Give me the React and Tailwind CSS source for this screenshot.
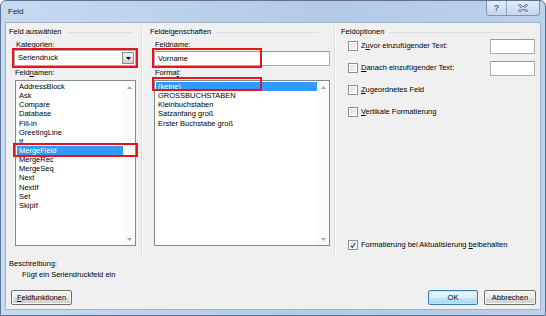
import React from 'react';

const FIELD_NAMES = ['AddressBlock', 'Ask', 'Compare', 'Database', 'Fill-in', 'GreetingLine', 'If', 'MergeField', 'MergeRec', 'MergeSeq', 'Next', 'NextIf', 'Set', 'SkipIf'];
const FORMATS = ['(keine)', 'GROSSBUCHSTABEN', 'Kleinbuchstaben', 'Satzanfang groß', 'Erster Buchstabe groß'];

const GroupHeader = ({ title, className }) => (
  <div className={`flex items-center h-[10px] ${className}`}>
    <span className="whitespace-nowrap">{title}</span>
    <div className="flex-1 h-px bg-[#d5dfe5] ml-[5px]"></div>
  </div>
);

const Arrow = ({ up }) => (
  <div className="w-[12px] h-[12px] flex items-center justify-center">
    <svg width="5" height="3" viewBox="0 0 5 3">
      {up ? <path d="M0 3 L2.5 0 L5 3 Z" fill="#a7a7a7" /> : <path d="M0 0 L2.5 3 L5 0 Z" fill="#a7a7a7" />}
    </svg>
  </div>
);

const ListBox = ({ items, selected, className }) => (
  <div className={`flex border border-[#828790] bg-white ${className}`}>
    <div className="flex-1 pt-px pl-px">
      {items.map((it, i) => (
        <div
          key={i}
          className={`h-[9.15px] leading-[9.15px] pl-[2px] whitespace-nowrap ${i === selected ? 'bg-[#3399ff] text-white' : ''}`}
        >
          {it}
        </div>
      ))}
    </div>
    <div className="w-[12px] flex flex-col justify-between bg-[#fbfbfb]">
      <Arrow up />
      <Arrow />
    </div>
  </div>
);

const Checkbox = ({ checked }) => (
  <div className="w-[10px] h-[10px] border border-[#8e8f8f] bg-white p-px shrink-0">
    <div className="w-full h-full bg-[linear-gradient(135deg,#dcdee0,#f8f8f8)] flex items-center justify-center">
      {checked && (
        <svg width="7" height="7" viewBox="0 0 7 7">
          <path d="M1 3.8 L2.8 5.8 L6 0.8" stroke="#3a51a6" strokeWidth="1.4" fill="none" />
        </svg>
      )}
    </div>
  </div>
);

const TextBox = ({ className, children }) => (
  <div className={`border border-[#abadb3] border-t-[#8e9aa8] bg-white ${className}`}>{children}</div>
);

const Btn = ({ children, isDefault, className }) => (
  <div
    className={`h-[15px] rounded-[2px] border flex items-center justify-center ${
      isDefault
        ? 'border-[#3c7fb1] bg-[linear-gradient(to_bottom,#eaf6fd_0%,#d9f0fc_50%,#bee6fd_51%,#a7d9f5_100%)] shadow-[inset_0_0_0_1px_#c4e5f6]'
        : 'border-[#707070] bg-[linear-gradient(to_bottom,#f2f2f2_0%,#ebebeb_50%,#dddddd_51%,#cfcfcf_100%)] shadow-[inset_0_0_0_1px_#fcfcfc]'
    } ${className}`}
  >
    {children}
  </div>
);

const OptionRow = ({ children, input, className }) => (
  <div className={`flex items-center h-[16px] pl-[12px] ${className}`}>
    <Checkbox />
    <span className="ml-[3px] whitespace-nowrap">{children}</span>
    {input && <TextBox className="ml-auto mr-[5px] w-[45px] h-[15px]" />}
  </div>
);

export default function App() {
  return (
    <div className="w-[546px] h-[316px] rounded-t-[6px] border border-[#5a7393] bg-[linear-gradient(to_right,#c6daf0,#b3cbe7_60%,#bcd2eb)] flex flex-col font-['Liberation_Sans',Arial,sans-serif] text-[7.5px] leading-[10px] text-black overflow-hidden">
      {/* title bar */}
      <div className="h-[21px] flex items-start">
        <span className="pl-[7px] pt-[6px] text-[8px] text-[#1e1e1e]">Feld</span>
        <div className="ml-auto mr-[5px] flex h-[15px] border border-t-0 border-[#7d95b2] rounded-b-[4px] overflow-hidden bg-[linear-gradient(to_bottom,#e3ecf7,#c4d7ed)]">
          <div className="w-[20px] flex items-center justify-center border-r border-[#8ea5c0] text-[#5a6e87] font-bold text-[9px]">?</div>
          <div className="w-[32px] flex items-center justify-center">
            <svg width="10" height="8" viewBox="0 0 10 8">
              <path d="M1.5 1 L8.5 7 M8.5 1 L1.5 7" stroke="#5f7491" strokeWidth="2.4" strokeLinecap="round" />
              <path d="M1.5 1 L8.5 7 M8.5 1 L1.5 7" stroke="#eef3f9" strokeWidth="1" strokeLinecap="round" />
            </svg>
          </div>
        </div>
      </div>

      {/* client area */}
      <div className="mx-[4px] h-[288px] border border-[#9fb2ca] bg-[#f0f0f0] flex flex-col">
        <div className="mt-[4px] h-[228px] flex">
          {/* Feld auswählen */}
          <div className="w-[135px] flex flex-col">
            <GroupHeader title="Feld auswählen" className="pl-[3px] pr-[9px]" />
            <div className="mt-[3px] pl-[10px]">Kategorien:</div>
            <div className="relative ml-[8px] w-[122px] h-[16px] border border-[#acacac] bg-white flex items-center">
              <span className="pl-[3px] flex-1">Seriendruck</span>
              <div className="w-[12px] h-[12px] mr-px border border-[#8c8c8c] bg-[linear-gradient(to_bottom,#f2f2f2,#d0d0d0)] flex items-center justify-center">
                <svg width="5" height="3" viewBox="0 0 5 3">
                  <path d="M0 0 L2.5 3 L5 0 Z" fill="#000" />
                </svg>
              </div>
              <div className="absolute -inset-[3px] border-2 border-[#e8141b]"></div>
            </div>
            <div className="mt-[2px] pl-[9px]">
              Feld<u className="underline-offset-1">n</u>amen:
            </div>
            <div className="relative ml-[9px] mt-[2px] w-[121px]">
              <ListBox items={FIELD_NAMES} selected={7} className="h-[166px]" />
              <div className="absolute left-[-2px] top-[63px] w-[125px] h-[14px] border-2 border-[#e8141b]"></div>
            </div>
          </div>

          <div className="w-[2px] border-l border-[#d5dfe5] border-r border-r-white"></div>

          {/* Feldeigenschaften */}
          <div className="w-[191px] flex flex-col">
            <GroupHeader title="Feldeigenschaften" className="pl-[7px] pr-[16px]" />
            <div className="mt-[3px] pl-[12px]">
              <u className="underline-offset-1">F</u>eldname:
            </div>
            <div className="relative ml-[11px] mt-px w-[176px]">
              <TextBox className="h-[15px] flex items-center pl-[3px]">Vorname</TextBox>
              <div className="absolute left-[-2px] top-[-3px] w-[110px] h-[20px] border-2 border-[#e8141b]"></div>
            </div>
            <div className="mt-[2px] pl-[12px]">
              Forma<u className="underline-offset-1">t</u>:
            </div>
            <div className="relative ml-[11px] mt-[2px] w-[176px]">
              <ListBox items={FORMATS} selected={0} className="h-[166px]" />
              <div className="absolute left-[-2px] top-[-3px] w-[110px] h-[14px] border-2 border-[#e8141b]"></div>
            </div>
          </div>

          <div className="w-[2px] border-l border-[#d5dfe5] border-r border-r-white"></div>

          {/* Feldoptionen */}
          <div className="flex-1 flex flex-col">
            <GroupHeader title="Feldoptionen" className="pl-[5px] pr-[18px]" />
            <OptionRow input className="mt-px">
              Z<u className="underline-offset-1">u</u>vor einzufügender Text:
            </OptionRow>
            <OptionRow input className="mt-[6px]">
              <u className="underline-offset-1">D</u>anach einzufügender Text:
            </OptionRow>
            <OptionRow className="mt-[6px]">
              <u className="underline-offset-1">Z</u>ugeordnetes Feld
            </OptionRow>
            <OptionRow className="mt-[6px]">
              <u className="underline-offset-1">V</u>ertikale Formatierung
            </OptionRow>
            <div className="mt-auto mb-[2px] flex items-center h-[16px] pl-[12px]">
              <Checkbox checked />
              <span className="ml-[3px] whitespace-nowrap">
                Formatierung bei Aktualisierung <u className="underline-offset-1">b</u>eibehalten
              </span>
            </div>
          </div>
        </div>

        {/* description + buttons */}
        <div className="mt-[4px] pl-[3px]">Beschreibung:</div>
        <div className="mt-px pl-[16px]">Fügt ein Seriendruckfeld ein</div>
        <div className="mt-[10px] flex items-center">
          <Btn className="ml-[5px] w-[61px]">
            <span>
              <u className="underline-offset-1">F</u>eldfunktionen
            </span>
          </Btn>
          <Btn isDefault className="ml-auto w-[50px]">OK</Btn>
          <Btn className="ml-[6px] mr-[4px] w-[52px]">Abbrechen</Btn>
        </div>
      </div>
    </div>
  );
}
